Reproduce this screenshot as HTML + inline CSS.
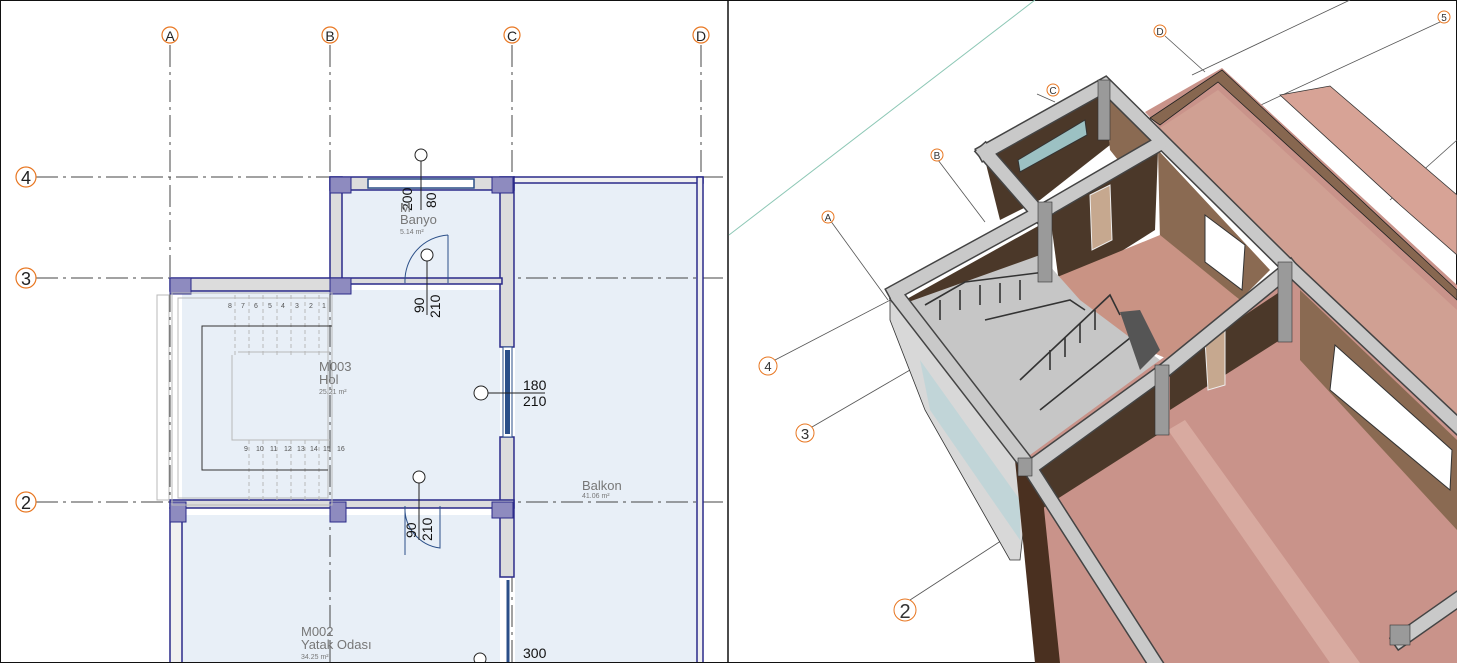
<!DOCTYPE html>
<html><head><meta charset="utf-8"><style>
html,body{margin:0;padding:0;background:#fff}
svg{display:block}
text{font-family:"Liberation Sans",sans-serif}
</style></head><body>
<svg width="1457" height="663" viewBox="0 0 1457 663" xmlns="http://www.w3.org/2000/svg">
<rect x="0" y="0" width="1457" height="663" fill="#fff"/>
<!-- ===== LEFT PLAN ===== -->
<g>
<rect x="342" y="190" width="158" height="88" fill="#e8eff7"/>
<rect x="182" y="290" width="318" height="210" fill="#e8eff7"/>
<rect x="182" y="515" width="318" height="148" fill="#e8eff7"/>
<rect x="515" y="183" width="182" height="480" fill="#e8eff7"/>
<g stroke="#444" stroke-width="1" stroke-dasharray="22,5,3,5" fill="none">
<line x1="170" y1="45" x2="170" y2="663"/>
<line x1="330" y1="45" x2="330" y2="663"/>
<line x1="512" y1="45" x2="512" y2="663"/>
<line x1="701" y1="45" x2="701" y2="663"/>
<line x1="36" y1="177" x2="728" y2="177"/>
<line x1="36" y1="278" x2="728" y2="278"/>
<line x1="36" y1="502" x2="728" y2="502"/>
</g>
<g fill="#fff" stroke="#e87722" stroke-width="1.2">
<circle cx="170" cy="35" r="8"/><circle cx="330" cy="35" r="8"/><circle cx="512" cy="35" r="8"/><circle cx="701" cy="35" r="8"/>
<circle cx="26" cy="177" r="10"/><circle cx="26" cy="278" r="10"/><circle cx="26" cy="502" r="10"/>
</g>
<g font-size="14" fill="#222" text-anchor="middle">
<text x="170" y="41">A</text><text x="330" y="41">B</text><text x="512" y="41">C</text><text x="701" y="41">D</text>
<text x="26" y="184" font-size="18">4</text><text x="26" y="285" font-size="18">3</text><text x="26" y="509" font-size="18">2</text>
</g>
<g fill="#dcdcdc" stroke="#2a2a8a" stroke-width="1.5">
<rect x="330" y="177" width="184" height="13"/>
<rect x="330" y="177" width="12" height="108"/>
<rect x="500" y="177" width="14" height="170"/>
<rect x="170" y="278" width="172" height="13"/>
<rect x="342" y="278" width="160" height="6"/>
<rect x="500" y="437" width="14" height="140"/>
<rect x="170" y="500" width="344" height="8"/>
<rect x="514" y="177" width="189" height="6" fill="#f0f0f0"/>
<rect x="697" y="177" width="6" height="486" fill="#f0f0f0"/>
<rect x="170" y="508" width="12" height="155" fill="#f0f0f0"/>
</g>
<rect x="368" y="179" width="106" height="9" fill="#fff" stroke="#2b4f88" stroke-width="1.5"/>
<rect x="503" y="347" width="9" height="90" fill="#fff" stroke="#2b4f88"/>
<rect x="505" y="350" width="5" height="84" fill="#2b4f88"/>
<line x1="508" y1="580" x2="508" y2="663" stroke="#2b4f88" stroke-width="3"/>
<g fill="#8e8bbf" stroke="#2a2a8a">
<rect x="330" y="177" width="21" height="16"/><rect x="492" y="177" width="21" height="16"/>
<rect x="170" y="278" width="21" height="16"/><rect x="330" y="278" width="21" height="16"/>
<rect x="170" y="502" width="16" height="20"/><rect x="330" y="502" width="16" height="20"/><rect x="492" y="502" width="21" height="16"/>
</g>
<g stroke="#b8b8b8" fill="none">
<rect x="157" y="295" width="12" height="205"/>
<rect x="172" y="293" width="160" height="212"/>
<rect x="178" y="298" width="150" height="200"/>
<polyline points="232,355 232,440 330,440"/>
<polyline points="238,352 330,352"/>
<g stroke-dasharray="4,3">
<line x1="235" y1="295" x2="235" y2="355"/><line x1="249" y1="295" x2="249" y2="355"/><line x1="263" y1="295" x2="263" y2="355"/><line x1="277" y1="295" x2="277" y2="355"/><line x1="291" y1="295" x2="291" y2="355"/><line x1="305" y1="295" x2="305" y2="355"/><line x1="319" y1="295" x2="319" y2="355"/>
<line x1="249" y1="440" x2="249" y2="500"/><line x1="263" y1="440" x2="263" y2="500"/><line x1="277" y1="440" x2="277" y2="500"/><line x1="291" y1="440" x2="291" y2="500"/><line x1="305" y1="440" x2="305" y2="500"/><line x1="319" y1="440" x2="319" y2="500"/>
</g>
</g>
<polyline points="332,326 202,326 202,470 328,470" fill="none" stroke="#333"/>
<g font-size="7" fill="#555"><text x="228" y="308">8</text><text x="241" y="308">7</text><text x="254" y="308">6</text><text x="268" y="308">5</text><text x="281" y="308">4</text><text x="295" y="308">3</text><text x="309" y="308">2</text><text x="322" y="308">1</text>
<text x="244" y="451">9</text><text x="256" y="451">10</text><text x="270" y="451">11</text><text x="284" y="451">12</text><text x="297" y="451">13</text><text x="310" y="451">14</text><text x="323" y="451">15</text><text x="337" y="451">16</text></g>
<g fill="none" stroke="#2b4f88">
<path d="M448,235 L448,283 M448,235 A46,46 0 0 0 405,283"/>
<path d="M405,506 L405,555 M405,506 A40,40 0 0 0 440,548 L440,506" />
</g>
<g fill="#fff" stroke="#222"><circle cx="421" cy="155" r="6"/><circle cx="427" cy="255" r="6"/><circle cx="481" cy="393" r="7"/><circle cx="419" cy="477" r="6"/><circle cx="480" cy="659" r="6"/></g>
<g stroke="#222"><line x1="421" y1="161" x2="421" y2="210"/><line x1="427" y1="261" x2="427" y2="315"/><line x1="488" y1="393" x2="545" y2="393"/><line x1="419" y1="483" x2="419" y2="540"/><line x1="480" y1="663" x2="548" y2="663"/></g>
<g font-size="14" fill="#111">
<text x="523" y="390">180</text><text x="523" y="406">210</text><text x="523" y="658">300</text>
<text transform="translate(424,313) rotate(-90)">90</text><text transform="translate(440,318) rotate(-90)">210</text>
<text transform="translate(416,538) rotate(-90)">90</text><text transform="translate(432,541) rotate(-90)">210</text>
<text transform="translate(412,211) rotate(-90)">200</text><text transform="translate(436,208) rotate(-90)">80</text>
</g>
<g fill="#777"><text x="400" y="212" font-size="13">M</text><text x="400" y="224" font-size="13">Banyo</text><text x="400" y="234" font-size="7">5.14 m²</text>
<text x="319" y="371" font-size="13">M003</text><text x="319" y="384" font-size="13">Hol</text><text x="319" y="394" font-size="7">25.21 m²</text>
<text x="582" y="490" font-size="13">Balkon</text><text x="582" y="498" font-size="7">41.06 m²</text>
<text x="301" y="636" font-size="13">M002</text><text x="301" y="649" font-size="13">Yatak Odası</text><text x="301" y="659" font-size="7">34.25 m²</text></g>
</g>
<rect x="0.5" y="0.5" width="1456" height="662" fill="none" stroke="#111"/>
<line x1="728" y1="0" x2="728" y2="663" stroke="#111" stroke-width="1.5"/>

<!-- ===== RIGHT 3D ===== -->
<g>
<line x1="729" y1="235" x2="1035" y2="0" stroke="#8cc7b5"/>
<g stroke="#555" stroke-width="0.8" fill="none">
<line x1="1192" y1="75" x2="1350" y2="0"/>
<line x1="1250" y1="110" x2="1440" y2="22"/>
<line x1="1037" y1="94" x2="1055" y2="102"/>
<line x1="1165" y1="36" x2="1205" y2="72"/>
<line x1="938" y1="160" x2="985" y2="222"/>
<line x1="830" y1="220" x2="888" y2="300"/>
<line x1="775" y1="360" x2="900" y2="295"/>
<line x1="812" y1="427" x2="910" y2="370"/>
<line x1="910" y1="600" x2="1010" y2="535"/>
<line x1="1390" y1="200" x2="1457" y2="140"/>
</g>
<g fill="#fff" stroke="#e87722">
<circle cx="828" cy="217" r="6"/><circle cx="937" cy="155" r="6"/><circle cx="1053" cy="90" r="6"/><circle cx="1160" cy="31" r="6"/><circle cx="1444" cy="17" r="6"/>
<circle cx="768" cy="366" r="9"/><circle cx="805" cy="433" r="9"/><circle cx="905" cy="610" r="11"/>
</g>
<g fill="#333" text-anchor="middle" font-size="10"><text x="828" y="221">A</text><text x="937" y="159">B</text><text x="1053" y="94">C</text><text x="1160" y="35">D</text><text x="1444" y="21">5</text>
<text x="768" y="371" font-size="13">4</text><text x="805" y="439" font-size="15">3</text><text x="905" y="618" font-size="20">2</text></g>
<polygon points="1280,95 1330,86 1457,195 1457,255 1400,205" fill="#d7a396" stroke="#333" stroke-width="0.8"/>
<polygon points="1145,112 1222,68 1457,285 1457,663 1050,663 1010,460 1160,360 1290,268" fill="#c9938a"/>
<polygon points="1150,118 1222,70 1457,290 1457,300 1218,82 1160,125" fill="#876750" stroke="#222" stroke-width="0.8"/>
<polygon points="1160,128 1218,90 1457,310 1457,420 1300,275" fill="#d0a093"/>
<polygon points="985,160 1100,92 1110,145 1040,200 1000,220" fill="#4b3829"/>
<polygon points="1105,95 1158,148 1150,200 1110,150" fill="#8a6a52"/>
<polygon points="1050,215 1158,150 1155,230 1060,290" fill="#4b3829"/>
<polygon points="1158,150 1270,270 1240,300 1160,240" fill="#8a6a52"/>
<polygon points="1050,280 1160,235 1240,300 1170,360 1100,330" fill="#c99384"/>
<polygon points="905,300 1040,225 1045,275 930,330" fill="#4b3829"/>
<polygon points="900,305 1040,255 1080,300 1160,360 1030,455 950,360" fill="#c6c6c6"/>
<g stroke="#333" stroke-width="1.6" fill="none">
<polyline points="925,305 965,282 1045,272"/>
<polyline points="985,320 1070,300 1085,310"/>
<polyline points="1020,380 1110,295 1120,315"/>
<polyline points="1040,410 1140,330"/>
<line x1="940" y1="300" x2="940" y2="320"/><line x1="960" y1="290" x2="960" y2="310"/><line x1="980" y1="285" x2="980" y2="305"/><line x1="1000" y1="283" x2="1000" y2="303"/><line x1="1020" y1="280" x2="1020" y2="300"/>
<line x1="1050" y1="350" x2="1050" y2="370"/><line x1="1065" y1="337" x2="1065" y2="357"/><line x1="1080" y1="323" x2="1080" y2="343"/><line x1="1095" y1="310" x2="1095" y2="330"/>
</g>
<polygon points="1120,312 1140,310 1160,350 1140,370" fill="#555"/>
<polygon points="1030,460 1160,375 1165,430 1040,510" fill="#4b3829"/>
<polygon points="1170,365 1290,285 1280,340 1170,410" fill="#4b3829"/>
<polygon points="1300,290 1457,440 1457,530 1300,360" fill="#8a6a52"/>
<!-- translucent interior wall in lower rooms -->
<polygon points="1168,430 1185,420 1360,663 1330,663" fill="#dcb0a5" opacity="0.8"/>
<polygon points="1018,160 1085,120 1087,135 1020,172" fill="#9cc1c3" stroke="#333"/>
<polygon points="1090,195 1110,185 1112,240 1092,250" fill="#c6a88f" stroke="#eee"/>
<polygon points="1205,215 1245,245 1242,290 1205,262" fill="#fff" stroke="#333"/>
<polygon points="1205,340 1225,330 1225,385 1208,390" fill="#c6a88f" stroke="#eee"/>
<polygon points="1335,345 1452,450 1450,490 1330,390" fill="#fff" stroke="#333"/>
<polygon points="890,290 905,300 1020,455 1030,470 1020,560 1010,560 925,410 890,320" fill="#d8d8d8" stroke="#333" stroke-width="0.8"/>
<polygon points="920,360 1020,500 1020,540 930,410" fill="#b8d4d8" opacity="0.7"/>
<polygon points="1015,460 1040,470 1060,663 1035,663" fill="#4a3020"/>
<g stroke="#444" stroke-width="16" stroke-linecap="square" fill="none">
<polyline points="895,292 1045,210"/>
<polyline points="985,152 1105,85 1290,268 1457,425"/>
<polyline points="1045,210 1157,145"/>
<polyline points="985,152 1040,215"/>
<polyline points="900,300 1030,468 1155,663"/>
<polyline points="1030,468 1165,370 1290,268"/>
<polyline points="1400,640 1457,600"/>
</g>
<g stroke="#c9c9c9" stroke-width="13" stroke-linecap="square" fill="none">
<polyline points="895,292 1045,210"/>
<polyline points="985,152 1105,85 1290,268 1457,425"/>
<polyline points="1045,210 1157,145"/>
<polyline points="985,152 1040,215"/>
<polyline points="900,300 1030,468 1155,663"/>
<polyline points="1030,468 1165,370 1290,268"/>
<polyline points="1400,640 1457,600"/>
</g>
<g fill="#9a9a9a" stroke="#333" stroke-width="0.6">
<rect x="1038" y="202" width="14" height="80"/><rect x="1155" y="365" width="14" height="70"/><rect x="1278" y="262" width="14" height="80"/><rect x="1098" y="80" width="12" height="60"/><rect x="1018" y="458" width="14" height="18"/><rect x="1390" y="625" width="20" height="20"/>
</g>
</g>
</svg>
</body></html>
